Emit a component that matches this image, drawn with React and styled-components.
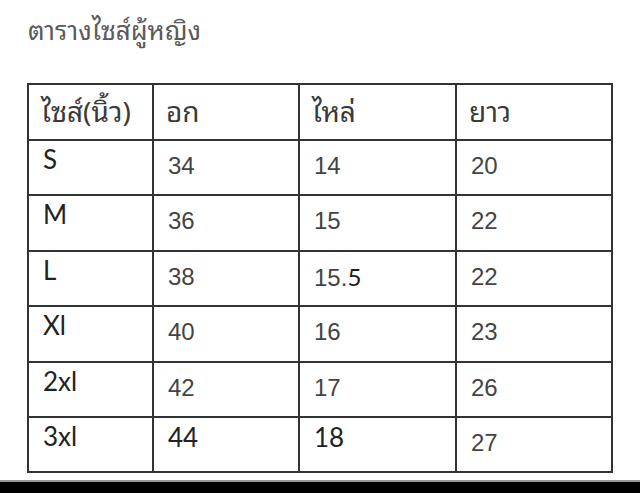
import React from "react";
import styled, { createGlobalStyle } from "styled-components";

const Global = createGlobalStyle`
  html, body { margin: 0; padding: 0; background: #fff; }
  #root { width: 640px; height: 493px; }
`;

const thai = `"Noto Sans Thai Looped", "Loma", "Garuda", "Tahoma", "Noto Sans Thai", "Noto Sans", sans-serif`;

const Page = styled.div`
  width: 640px;
  height: 493px;
  display: flex;
  flex-direction: column;
  background: #fff;
  overflow: hidden;
`;

const Content = styled.main`
  flex: 1;
  display: flex;
  flex-direction: column;
  padding: 11px 0 0 27px;
`;

const Title = styled.h1`
  margin: 0 0 0 1px;
  height: 72px;
  font-family: ${thai};
  font-weight: 400;
  font-size: 26px;
  line-height: 34px;
  color: #5a5a5a;
`;

const Grid = styled.div`
  display: grid;
  grid-template-columns: 123px 144px 155px 154px;
  grid-template-rows: 54px 53px 54px 53px 54px 53px 53px;
  gap: 2px;
  padding: 2px;
  width: max-content;
  background: #333;
`;

const Cell = styled.div`
  background: #fff;
  padding: ${(p) =>
    p.$kind === "size" ? "4px 0 0 14px" : p.$kind === "head" ? "6px 0 0 12px" : p.$kind === "dark" ? "5px 0 0 14px" : "11px 0 0 14px"};
  font-family: ${(p) =>
    p.$kind === "head"
      ? thai
      : p.$kind === "size" || p.$kind === "dark"
      ? `"Lato", "Open Sans", sans-serif`
      : `"Liberation Sans", Arial, sans-serif`};
  font-size: ${(p) => (p.$kind === "head" ? "28px" : p.$kind === "num" ? "24px" : "26px")};
  line-height: ${(p) => (p.$kind === "head" ? "38px" : "28px")};
  color: ${(p) => (p.$kind === "num" ? "#444" : p.$kind === "head" ? "#3a3a3a" : "#222")};
`;

const Dark = styled.span`
  color: #1a1a1a;
  font-family: "Lato", "Open Sans", sans-serif;
`;

const Bottom = styled.footer`
  height: 11px;
  background: #000;
  border-top: 2px solid #9a9a9a;
`;

const head = ["ไซส์(นิ้ว)", "อก", "ไหล่", "ยาว"];
const rows = [
  ["S", "34", "14", "20"],
  ["M", "36", "15", "22"],
  ["L", "38", "15.5", "22"],
  ["Xl", "40", "16", "23"],
  ["2xl", "42", "17", "26"],
  ["3xl", "44", "18", "27"],
];

export default function App() {
  return (
    <Page>
      <Global />
      <Content>
        <Title>ตารางไซส์ผู้หญิง</Title>
        <Grid>
          {head.map((h) => (
            <Cell key={h} $kind="head">{h}</Cell>
          ))}
          {rows.map((r, ri) =>
            r.map((v, ci) => {
              let kind = ci === 0 ? "size" : "num";
              if (ri === 5 && (ci === 1 || ci === 2)) kind = "dark";
              let content = v;
              if (v === "15.5") content = <>15.<Dark>5</Dark></>;
              return (
                <Cell key={ri + "-" + ci} $kind={kind}>
                  {content}
                </Cell>
              );
            })
          )}
        </Grid>
      </Content>
      <Bottom />
    </Page>
  );
}
